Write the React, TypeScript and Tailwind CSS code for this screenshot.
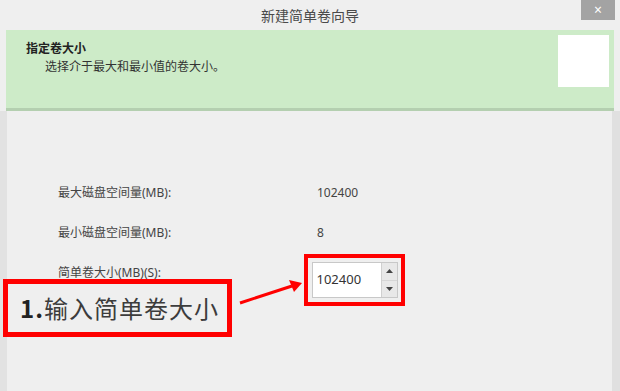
import React from "react";

const font = { fontFamily: '"Noto Sans", "Noto Sans CJK SC", sans-serif' };

function SpinBox() {
  return (
    <div className="flex h-[36px] w-[86px] border border-[#c8c8c8] bg-white">
      <div className="flex flex-1 items-center pl-[4px] text-[13px] text-[#333]">102400</div>
      <div className="flex w-[16px] flex-col border-l border-[#d0d0d0] bg-[#e8e8e8]">
        <div className="flex flex-1 items-center justify-center border-b border-[#d6d6d6]">
          <svg width="7" height="4" viewBox="0 0 7 4"><path d="M0 4 L3.5 0 L7 4 Z" fill="#444" /></svg>
        </div>
        <div className="flex flex-1 items-center justify-center">
          <svg width="7" height="4" viewBox="0 0 7 4"><path d="M0 0 L3.5 4 L7 0 Z" fill="#444" /></svg>
        </div>
      </div>
    </div>
  );
}

export default function App() {
  return (
    <div className="relative h-[391px] w-[620px] overflow-hidden bg-[#efefef]" style={font}>
      {/* Title bar */}
      <div className="relative flex h-[30px] items-center justify-center">
        <span className="text-[14px] text-[#4a4a4a]">新建简单卷向导</span>
        <div className="absolute right-[5px] top-0 flex h-[20px] w-[34px] items-center justify-center bg-[#a3a3a3] text-[14px] leading-none text-white">
          ×
        </div>
      </div>

      {/* Green header */}
      <div className="mx-[6px] flex h-[81px] justify-between border-b-[3px] border-[#b4cfb0] bg-[#cdebc8]">
        <div className="pl-[20px] pt-[10px]">
          <div className="text-[12px] font-bold leading-[18px] text-[#222]">指定卷大小</div>
          <div className="pl-[19px] text-[12px] leading-[18px] text-[#333]">选择介于最大和最小值的卷大小。</div>
        </div>
        <div className="mr-[5px] mt-[5px] h-[52px] w-[51px] bg-white" />
      </div>

      {/* Body */}
      <div className="flex h-[280px]">
        <div className="w-[7px] bg-[#e2e2e2]" />
        <div className="flex-1 pl-[51px] pt-[73px] text-[12px] text-[#444]">
          <div className="grid grid-cols-[259px_1fr] gap-y-[22px]">
            <div className="leading-[18px]">最大磁盘空间量(MB):</div>
            <div className="leading-[18px]">102400</div>
            <div className="leading-[18px]">最小磁盘空间量(MB):</div>
            <div className="leading-[18px]">8</div>
            <div className="leading-[18px]">简单卷大小(MB)(S):</div>
            <div />
          </div>
        </div>
        <div className="w-[8px] bg-[#e0e0e0]" />
      </div>

      {/* Annotation: red box around spin box */}
      <div className="absolute left-[304px] top-[254px] flex h-[52px] w-[101px] items-center justify-center border-[4px] border-[#ff0000]">
        <SpinBox />
      </div>

      {/* Annotation: label box */}
      <div className="absolute left-[3px] top-[279px] flex h-[58px] w-[229px] items-center border-[5px] border-[#ff0000] bg-[#efefef] pl-[12px]">
        <span className="text-[24px] leading-none tracking-[1px] text-[#3c3c3c]" style={{ fontFamily: '"Noto Sans CJK SC", sans-serif' }}>
          <span className="font-bold text-[#222]">1.</span>输入简单卷大小
        </span>
      </div>

      {/* Arrow */}
      <svg className="absolute left-[238px] top-[276px]" width="66" height="30" viewBox="0 0 66 30">
        <line x1="2" y1="27" x2="54" y2="10" stroke="#ff0000" strokeWidth="3" />
        <path d="M64 7 L51 4 L56 16 Z" fill="#ff0000" />
      </svg>
    </div>
  );
}
